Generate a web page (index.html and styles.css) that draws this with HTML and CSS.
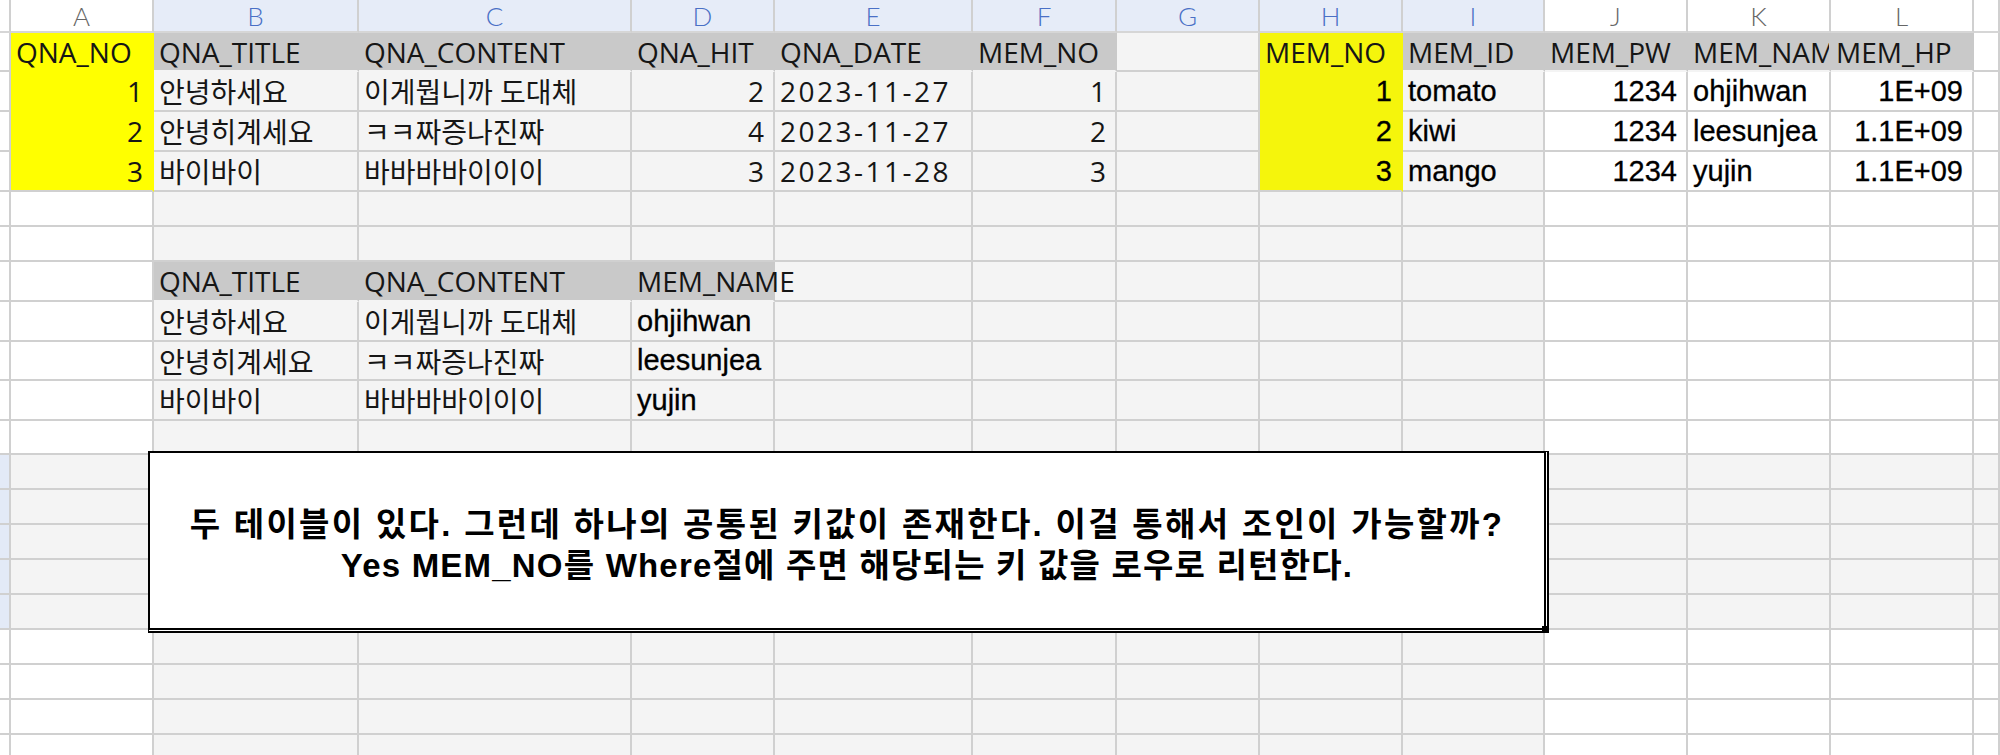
FILE: index.html
```html
<!DOCTYPE html>
<html lang="ko">
<head>
<meta charset="utf-8">
<title>QNA / MEMBER</title>
<link rel="stylesheet" href="styles.css">
</head>
<body>
<div class="wrap">
  <div class="sheet">
    <!-- column header row -->
    <div class="corner"></div>
    <div class="ch">A</div>
    <div class="ch sel">B</div>
    <div class="ch sel">C</div>
    <div class="ch sel">D</div>
    <div class="ch sel">E</div>
    <div class="ch sel">F</div>
    <div class="ch sel">G</div>
    <div class="ch sel">H</div>
    <div class="ch sel">I</div>
    <div class="ch">J</div>
    <div class="ch">K</div>
    <div class="ch">L</div>
    <div class="ch"></div>

    <!-- row 1 -->
    <div class="rh"></div>
    <div class="y">QNA_NO</div>
    <div class="g">QNA_TITLE</div>
    <div class="g">QNA_CONTENT</div>
    <div class="g">QNA_HIT</div>
    <div class="g">QNA_DATE</div>
    <div class="g">MEM_NO</div>
    <div class="s"></div>
    <div class="ys">MEM_NO</div>
    <div class="g">MEM_ID</div>
    <div class="g">MEM_PW</div>
    <div class="g">MEM_NAME</div>
    <div class="g">MEM_HP</div>
    <div></div>

    <!-- row 2 -->
    <div class="rh"></div>
    <div class="y r">1</div>
    <div class="s">안녕하세요</div>
    <div class="s">이게뭡니까 도대체</div>
    <div class="s r">2</div>
    <div class="s dt">2023-11-27</div>
    <div class="s r">1</div>
    <div class="s"></div>
    <div class="ys r ar">1</div>
    <div class="s ar">tomato</div>
    <div class="r ar">1234</div>
    <div class="ar">ohjihwan</div>
    <div class="r ar">1E+09</div>
    <div></div>

    <!-- row 3 -->
    <div class="rh"></div>
    <div class="y r">2</div>
    <div class="s">안녕히계세요</div>
    <div class="s">ㅋㅋ짜증나진짜</div>
    <div class="s r">4</div>
    <div class="s dt">2023-11-27</div>
    <div class="s r">2</div>
    <div class="s"></div>
    <div class="ys r ar">2</div>
    <div class="s ar">kiwi</div>
    <div class="r ar">1234</div>
    <div class="ar">leesunjea</div>
    <div class="r ar">1.1E+09</div>
    <div></div>

    <!-- row 4 -->
    <div class="rh"></div>
    <div class="y last r">3</div>
    <div class="s">바이바이</div>
    <div class="s">바바바바이이이</div>
    <div class="s r">3</div>
    <div class="s dt">2023-11-28</div>
    <div class="s r">3</div>
    <div class="s"></div>
    <div class="ys last r ar">3</div>
    <div class="s ar">mango</div>
    <div class="r ar">1234</div>
    <div class="ar">yujin</div>
    <div class="r ar">1.1E+09</div>
    <div></div>

    <!-- row 5 -->
    <div class="rh"></div><div></div>
    <div class="s"></div><div class="s"></div><div class="s"></div><div class="s"></div>
    <div class="s"></div><div class="s"></div><div class="s"></div><div class="s"></div>
    <div></div><div></div><div></div><div></div>

    <!-- row 6 -->
    <div class="rh"></div><div></div>
    <div class="s"></div><div class="s"></div><div class="s"></div><div class="s"></div>
    <div class="s"></div><div class="s"></div><div class="s"></div><div class="s"></div>
    <div></div><div></div><div></div><div></div>

    <!-- row 7 -->
    <div class="rh"></div><div></div>
    <div class="g">QNA_TITLE</div>
    <div class="g">QNA_CONTENT</div>
    <div class="g ov">MEM_NAME</div>
    <div class="s"></div><div class="s"></div><div class="s"></div><div class="s"></div><div class="s"></div>
    <div></div><div></div><div></div><div></div>

    <!-- row 8 -->
    <div class="rh"></div><div></div>
    <div class="s">안녕하세요</div>
    <div class="s">이게뭡니까 도대체</div>
    <div class="s ar">ohjihwan</div>
    <div class="s"></div><div class="s"></div><div class="s"></div><div class="s"></div><div class="s"></div>
    <div></div><div></div><div></div><div></div>

    <!-- row 9 -->
    <div class="rh"></div><div></div>
    <div class="s">안녕히계세요</div>
    <div class="s">ㅋㅋ짜증나진짜</div>
    <div class="s ar">leesunjea</div>
    <div class="s"></div><div class="s"></div><div class="s"></div><div class="s"></div><div class="s"></div>
    <div></div><div></div><div></div><div></div>

    <!-- row 10 -->
    <div class="rh"></div><div></div>
    <div class="s">바이바이</div>
    <div class="s">바바바바이이이</div>
    <div class="s ar">yujin</div>
    <div class="s"></div><div class="s"></div><div class="s"></div><div class="s"></div><div class="s"></div>
    <div></div><div></div><div></div><div></div>

    <!-- row 11 -->
    <div class="rh"></div><div></div>
    <div class="s"></div><div class="s"></div><div class="s"></div><div class="s"></div>
    <div class="s"></div><div class="s"></div><div class="s"></div><div class="s"></div>
    <div></div><div></div><div></div><div></div>

    <!-- rows 12-16 (selected rows) -->
    <div class="rh sel"></div>
    <div class="s"></div><div class="s"></div><div class="s"></div><div class="s"></div><div class="s"></div><div class="s"></div><div class="s"></div>
    <div class="s"></div><div class="s"></div><div class="s"></div><div class="s"></div><div class="s"></div><div class="s"></div>

    <div class="rh sel"></div>
    <div class="s"></div><div class="s"></div><div class="s"></div><div class="s"></div><div class="s"></div><div class="s"></div><div class="s"></div>
    <div class="s"></div><div class="s"></div><div class="s"></div><div class="s"></div><div class="s"></div><div class="s"></div>

    <div class="rh sel"></div>
    <div class="s"></div><div class="s"></div><div class="s"></div><div class="s"></div><div class="s"></div><div class="s"></div><div class="s"></div>
    <div class="s"></div><div class="s"></div><div class="s"></div><div class="s"></div><div class="s"></div><div class="s"></div>

    <div class="rh sel"></div>
    <div class="s"></div><div class="s"></div><div class="s"></div><div class="s"></div><div class="s"></div><div class="s"></div><div class="s"></div>
    <div class="s"></div><div class="s"></div><div class="s"></div><div class="s"></div><div class="s"></div><div class="s"></div>

    <div class="rh sel"></div>
    <div class="s"></div><div class="s"></div><div class="s"></div><div class="s"></div><div class="s"></div><div class="s"></div><div class="s"></div>
    <div class="s"></div><div class="s"></div><div class="s"></div><div class="s"></div><div class="s"></div><div class="s"></div>

    <!-- rows 17-20 -->
    <div class="rh"></div><div></div>
    <div class="s"></div><div class="s"></div><div class="s"></div><div class="s"></div>
    <div class="s"></div><div class="s"></div><div class="s"></div><div class="s"></div>
    <div></div><div></div><div></div><div></div>

    <div class="rh"></div><div></div>
    <div class="s"></div><div class="s"></div><div class="s"></div><div class="s"></div>
    <div class="s"></div><div class="s"></div><div class="s"></div><div class="s"></div>
    <div></div><div></div><div></div><div></div>

    <div class="rh"></div><div></div>
    <div class="s"></div><div class="s"></div><div class="s"></div><div class="s"></div>
    <div class="s"></div><div class="s"></div><div class="s"></div><div class="s"></div>
    <div></div><div></div><div></div><div></div>

    <div class="rh"></div><div></div>
    <div class="s"></div><div class="s"></div><div class="s"></div><div class="s"></div>
    <div class="s"></div><div class="s"></div><div class="s"></div><div class="s"></div>
    <div></div><div></div><div></div><div></div>
  </div>

  <div class="note">
    <p class="l1">두 테이블이 있다. 그런데 하나의 공통된 키값이 존재한다. 이걸 통해서 조인이 가능할까?</p>
    <p class="l2">Yes MEM_NO를 Where절에 주면 해당되는 키 값을 로우로 리턴한다.</p>
  </div>
</div>
</body>
</html>
```

FILE: styles.css
```css
html, body {
  margin: 0;
  padding: 0;
  background: #ffffff;
  overflow: hidden;
}

.wrap {
  position: relative;
  width: 2000px;
  height: 755px;
  overflow: hidden;
}

.sheet {
  display: grid;
  grid-template-columns: 11px 143px 205px 273px 143px 198px 144px 143px 143px 142px 143px 143px 143px 26px;
  grid-template-rows: 33px 39px 40px 40px 40px 35px 35px 40px 40px 39px 40px 34px repeat(9, 35px);
  width: 2000px;
  height: 755px;
  overflow: hidden;
  font-family: "Open Sans", "Noto Sans CJK KR", sans-serif;
  font-size: 28px;
  color: #161616;
}

.sheet > div {
  box-sizing: border-box;
  min-width: 0;
  display: flex;
  align-items: center;
  padding: 0 5px;
  white-space: nowrap;
  overflow: hidden;
  background: #ffffff;
  border-right: 2px solid #d0d0d0;
  border-bottom: 2px solid #d0d0d0;
}

/* column headers */
.sheet > .corner {
  padding: 0;
  border-bottom-color: #d6d6d6;
}
.sheet > .ch {
  justify-content: center;
  padding: 2px 0 0;
  font-family: "Lato", "Open Sans", sans-serif;
  font-weight: 300;
  font-size: 26px;
  line-height: 29px;
  color: #666666;
  border-bottom-color: #d6d6d6;
}
.sheet > .ch.sel {
  background: #e6ecf8;
  color: #4a70c6;
}

/* row header strip */
.sheet > .rh {
  padding: 0;
}
.sheet > .rh.sel {
  background: #e3eaf7;
}

/* selection shading */
.sheet > .s {
  background: #f4f4f4;
}

/* grey header fill */
.sheet > .g {
  background: #c9c9c9;
  border-right-color: #c9c9c9;
  border-bottom-color: #f4f4f4;
}

/* yellow key column */
.sheet > .y {
  background: #ffff00;
  border-right-color: #ffff00;
  border-bottom-color: #ffff00;
}
.sheet > .ys {
  background: #f5f50c;
  border-right-color: #f5f50c;
  border-bottom-color: #f5f50c;
}
.sheet > .y.last,
.sheet > .ys.last {
  border-bottom-color: #d0d0d0;
}

/* alignment / fonts */
.sheet > .r {
  justify-content: flex-end;
  padding-right: 9px;
}
.sheet > .ar {
  font-family: "Liberation Sans", "Noto Sans CJK KR", sans-serif;
  font-size: 29px;
  color: #000000;
  -webkit-text-stroke: 0.3px #000000;
}
.sheet > .dt {
  letter-spacing: 2.5px;
}
.sheet > .ov {
  overflow: visible;
  z-index: 1;
}

/* text box over the grid */
.note {
  position: absolute;
  left: 148px;
  top: 451px;
  width: 1401px;
  height: 182px;
  box-sizing: border-box;
  background: #ffffff;
  border-top: 2px solid #000000;
  border-left: 2px solid #000000;
  border-right: 5px double #000000;
  border-bottom: 5px double #000000;
  display: flex;
  flex-direction: column;
  justify-content: center;
  padding-top: 8px;
  font-family: "Liberation Sans", "Noto Sans CJK KR", sans-serif;
  font-weight: 700;
  font-size: 33px;
  line-height: 41px;
  color: #000000;
  text-align: center;
}
.note p {
  margin: 0;
  white-space: nowrap;
}
.note .l1 {
  letter-spacing: 2.3px;
}
.note .l2 {
  letter-spacing: 1.2px;
}
.note::after {
  content: "";
  position: absolute;
  right: -5px;
  bottom: -5px;
  width: 7px;
  height: 7px;
  background: #000000;
}
```
